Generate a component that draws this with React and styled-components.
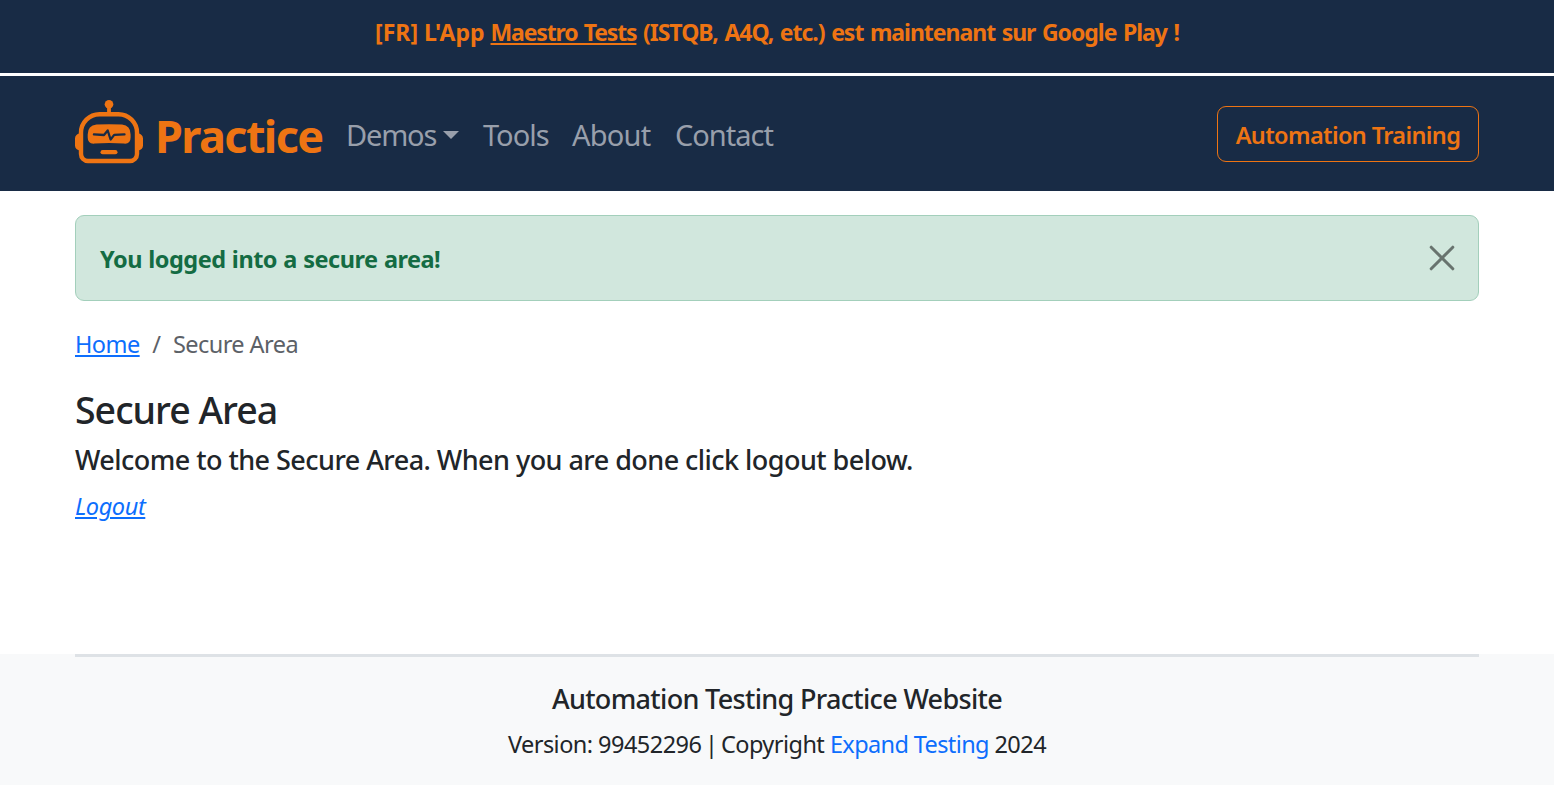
import React from "react";
import styled, { createGlobalStyle } from "styled-components";

const GlobalStyle = createGlobalStyle`
  *, *::before, *::after { box-sizing: border-box; }
  body {
    margin: 0;
    background: #fff;
    color: #212529;
    font-family: "Segoe UI", "Noto Sans", "Open Sans", sans-serif;
    font-size: 23.5px;
    line-height: 36px;
  }
`;

const Page = styled.div`
  display: flex;
  flex-direction: column;
  height: 785px;
  overflow: hidden;
  white-space: nowrap;
`;

const Container = styled.div`
  width: 1404px;
  margin: 0 auto;
`;

const Banner = styled.div`
  height: 76px;
  padding-top: 14px;
  background: #182b45;
  border-bottom: 3px solid #fff;
  color: #ee7413;
  font-size: 23px;
  font-weight: 700;
  text-align: center;
`;

const BannerText = styled.span`
  letter-spacing: ${(p) => p.$track || "0"};
  word-spacing: ${(p) => p.$words || "0"};
`;

const BannerLink = styled.a`
  color: inherit;
  letter-spacing: -1.15px;
  word-spacing: 1.5px;
  text-decoration: underline;
  text-decoration-thickness: 2px;
  text-underline-offset: 2px;
`;

const Navbar = styled.nav`
  height: 115px;
  background: #182b45;
`;

const NavInner = styled(Container)`
  display: flex;
  align-items: center;
  height: 115px;
`;

const Brand = styled.a`
  display: flex;
  align-items: center;
  width: 271px;
  color: #ee7413;
`;

const Logo = styled.svg`
  width: 69px;
  height: 66px;
  margin: 0 11px 4px 0;
`;

const BrandName = styled.span`
  padding-top: 4px;
  font-size: 45px;
  font-weight: 700;
  line-height: 60px;
  letter-spacing: -1.6px;
`;

const NavLink = styled.a`
  display: flex;
  align-items: center;
  width: ${(p) => p.$width};
  padding-top: 2px;
  color: #989fab;
  font-size: 29px;
  line-height: 44px;
  letter-spacing: ${(p) => p.$track || "-1px"};
`;

const Caret = styled.span`
  margin-left: 7px;
  border: 8px solid transparent;
  border-top-color: currentColor;
  border-bottom: 0;
`;

const TrainingButton = styled.button`
  width: 262px;
  height: 56px;
  margin-left: auto;
  padding: 3px 0 0;
  border: 1px solid #ee7413;
  border-radius: 9px;
  background: transparent;
  color: #ee7413;
  font: inherit;
  font-weight: 600;
  letter-spacing: -0.63px;
`;

const Alert = styled.div`
  display: flex;
  align-items: center;
  justify-content: space-between;
  height: 86px;
  margin: 24px 0 25px;
  padding: 0 24px;
  border: 1px solid #a3cfbb;
  border-radius: 9px;
  background: #d1e7dd;
  color: #146c43;
  font-weight: 700;
  letter-spacing: -0.52px;
  word-spacing: 0.8px;
`;

const AlertText = styled.span`
  padding-top: 2px;
`;

const CloseIcon = styled.svg`
  width: 24px;
  height: 24px;
  color: #68736e;
  overflow: visible;
`;

const Link = styled.a`
  color: #0d6efd;
  text-decoration: ${(p) => (p.$plain ? "none" : "underline")};
  text-decoration-thickness: 2px;
  text-underline-offset: 2px;
  font-style: ${(p) => (p.$italic ? "italic" : "normal")};
  letter-spacing: ${(p) => p.$track || "inherit"};
`;

const Breadcrumb = styled.div`
  display: flex;
  gap: 12.5px;
  color: #5c6167;
  letter-spacing: -0.55px;
`;

const Title = styled.h1`
  margin: 26px 0 11px;
  font-size: 37.5px;
  font-weight: 500;
  line-height: 44px;
  letter-spacing: -1px;
`;

const Subtitle = styled.h2`
  margin: 0 0 12px;
  font-size: 27px;
  font-weight: 500;
  line-height: 33px;
  letter-spacing: ${(p) => p.$track || "0"};
`;

const Footer = styled.footer`
  height: 131px;
  margin-top: auto;
  background: #f8f9fa;
  text-align: center;
`;

const FooterInner = styled(Container)`
  padding-top: 25px;
  border-top: 3px solid #dee2e6;
`;

const Version = styled.p`
  margin: -1px 0 0;
  letter-spacing: ${(p) => p.$track || "-0.54px"};
`;

const Divider = styled.span`
  margin: 0 -2px;
`;

function RobotLogo() {
  return (
    <Logo viewBox="0 0 69 66" fill="none">
      <circle cx="34" cy="5.2" r="4.3" fill="currentColor" />
      <path d="M34 6v9" stroke="currentColor" strokeWidth="3.8" />
      <path
        d="M24.500 15.2h19a18.500 18.500 0 0 1 18.500 18.500V55a7 7 0 0 1-7 7H13a7 7 0 0 1-7-7V33.7a18.500 18.500 0 0 1 18.500-18.500Z"
        stroke="currentColor"
        strokeWidth="4.4"
      />
      <path
        d="M5 34.5a5 5 0 0 0-5 5v7a5 5 0 0 0 5 5ZM63 34.5a5 5 0 0 1 5 5v7a5 5 0 0 1-5 5Z"
        fill="currentColor"
      />
      <path
        d="M21.500 25.600Q34 24.700 47 25.600Q55.600 26.500 55.600 35.500V38.500Q55.600 45.200 49 44.600Q34 43.200 19.500 44.600Q12.700 45.200 12.700 38.500V35.500Q12.700 26.500 21.500 25.600Z"
        fill="currentColor"
      />
      <path
        d="M18.900 35.400L29 36L32.700 31.500L35.600 40.500L39.200 35.900L49.500 35.400"
        stroke="#182b45"
        strokeWidth="2.300"
        strokeLinecap="round"
        strokeLinejoin="round"
      />
      <rect x="25.500" y="51" width="17" height="4.300" rx="2.150" fill="currentColor" />
    </Logo>
  );
}

export default function App() {
  return (
    <Page>
      <GlobalStyle />
      <Banner>
        <BannerText>[FR] L'App </BannerText>
        <BannerLink>Maestro Tests</BannerLink>
        <BannerText $track="-1.02px" $words="1.6px"> (ISTQB, A4Q, etc.) est maintenant sur Google Play !</BannerText>
      </Banner>
      <Navbar>
        <NavInner>
          <Brand>
            <RobotLogo />
            <BrandName>Practice</BrandName>
          </Brand>
          <NavLink $width="137px" $track="-1.2px">
            Demos
            <Caret />
          </NavLink>
          <NavLink $width="89px">Tools</NavLink>
          <NavLink $width="103px" $track="-0.8px">About</NavLink>
          <NavLink $width="100px">Contact</NavLink>
          <TrainingButton>Automation Training</TrainingButton>
        </NavInner>
      </Navbar>
      <Container>
        <Alert>
          <AlertText>You logged into a secure area!</AlertText>
          <CloseIcon viewBox="0 0 24 24" fill="none" stroke="currentColor" strokeWidth="3" strokeLinecap="round">
            <path d="M1.200 1.200l21.600 21.600M22.800 1.200l-21.600 21.600" />
          </CloseIcon>
        </Alert>
        <Breadcrumb>
          <Link>Home</Link>
          <span>/</span>
          <span>Secure Area</span>
        </Breadcrumb>
        <Title>Secure Area</Title>
        <Subtitle $track="-0.54px">Welcome to the Secure Area. When you are done click logout below.</Subtitle>
        <Link $italic $track="-0.4px">Logout</Link>
      </Container>
      <Footer>
        <FooterInner>
          <Subtitle $track="-0.67px">Automation Testing Practice Website</Subtitle>
          <Version>
            Version: 99452296 <Divider>|</Divider> Copyright <Link $plain $track="-0.62px">Expand Testing</Link> 2024
          </Version>
        </FooterInner>
      </Footer>
    </Page>
  );
}
